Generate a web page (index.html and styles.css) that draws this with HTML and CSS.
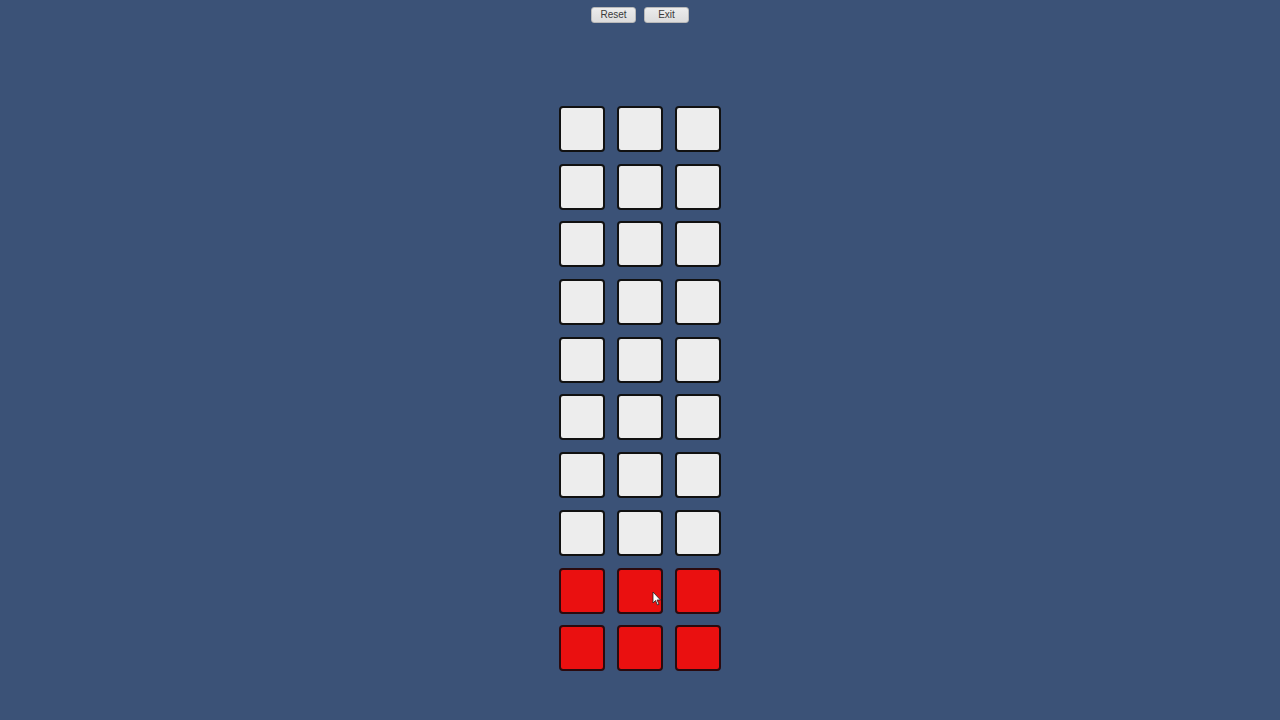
FILE: index.html
```html
<!DOCTYPE html>
<html>
<head>
<meta charset="utf-8">
<link rel="stylesheet" href="styles.css">
</head>
<body>
<div class="toolbar">
  <button class="btn">Reset</button>
  <button class="btn">Exit</button>
</div>
<div class="grid">
  <div class="cell"></div><div class="cell"></div><div class="cell"></div>
  <div class="cell"></div><div class="cell"></div><div class="cell"></div>
  <div class="cell"></div><div class="cell"></div><div class="cell"></div>
  <div class="cell"></div><div class="cell"></div><div class="cell"></div>
  <div class="cell"></div><div class="cell"></div><div class="cell"></div>
  <div class="cell"></div><div class="cell"></div><div class="cell"></div>
  <div class="cell"></div><div class="cell"></div><div class="cell"></div>
  <div class="cell"></div><div class="cell"></div><div class="cell"></div>
  <div class="cell red"></div><div class="cell red cursor-host"><svg class="cursor" width="10" height="15" viewBox="0 0 10 15"><path d="M1 1 L1 12 L3.5 9.5 L5.5 14 L7 13.3 L5 9 L8.5 9 Z" fill="#fff" stroke="#222" stroke-width="0.8"/></svg></div><div class="cell red"></div>
  <div class="cell red"></div><div class="cell red"></div><div class="cell red"></div>
</div>
</body>
</html>
```
FILE: styles.css
```css
html, body {
  margin: 0;
  padding: 0;
  background: #3b5277;
  width: 1280px;
  height: 720px;
  overflow: hidden;
  font-family: "Liberation Sans", Arial, sans-serif;
}
.toolbar {
  display: flex;
  justify-content: center;
  gap: 8px;
  padding-top: 7px;
}
.btn {
  width: 45px;
  height: 16px;
  padding: 0;
  margin: 0;
  border: 1px solid #b9b9b9;
  border-radius: 3px;
  background: linear-gradient(#ececec, #dcdcdc);
  color: #3a3a3a;
  font-family: "Liberation Sans", Arial, sans-serif;
  font-size: 10px;
  line-height: 14px;
}
.grid {
  display: grid;
  grid-template-columns: repeat(3, 46px);
  grid-auto-rows: 46px;
  column-gap: 12px;
  row-gap: 11.7px;
  justify-content: center;
  margin-top: 83px;
}
.cell {
  box-sizing: border-box;
  border: 2px solid #111;
  border-radius: 4px;
  background: #ededed;
}
.cell.red {
  background: #ea1010;
  border-color: #2a0a0e;
}
.cursor-host {
  position: relative;
}
.cursor {
  position: absolute;
  left: 33px;
  top: 21px;
}
```
